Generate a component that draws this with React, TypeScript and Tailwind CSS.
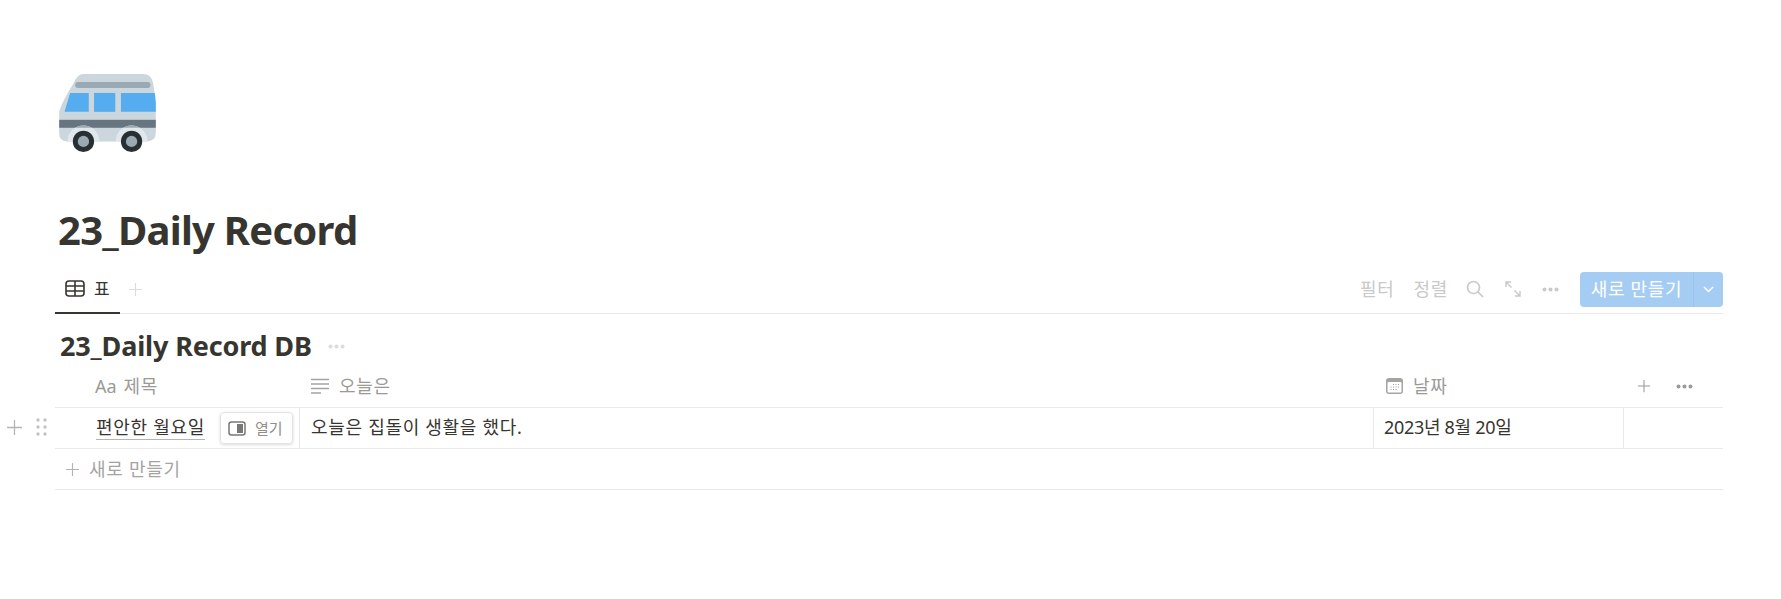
import React from 'react';

const BusIcon = () => (
  <svg width="97" height="78" viewBox="0 0 291 235" className="block">
    <path d="M73 0H253Q278 0 283 28Q291 70 291 110V178Q291 203 263 203H23Q0 203 0 178V113Q8 85 43 28Q55 0 73 0Z" fill="#CCD6DD" />
    <rect x="48" y="24" width="227" height="18" rx="9" fill="#99AAB5" />
    <path d="M33 57H89V114H16Z" fill="#55ACEE" />
    <rect x="105" y="57" width="64" height="57" fill="#55ACEE" />
    <path d="M186 57H288L291 85V114H186Z" fill="#55ACEE" />
    <rect x="0" y="138" width="291" height="24" fill="#66757F" />
    <path d="M25 203A48 48 0 0 1 121 203Z" fill="#E1E8ED" />
    <path d="M170 203A48 48 0 0 1 266 203Z" fill="#E1E8ED" />
    <path d="M48 162A48 48 0 0 1 98 162Z" fill="#99AAB5" />
    <path d="M193 162A48 48 0 0 1 243 162Z" fill="#99AAB5" />
    <circle cx="73" cy="203" r="32" fill="#292F33" />
    <circle cx="218" cy="203" r="32" fill="#292F33" />
    <circle cx="73" cy="203" r="17" fill="#99AAB5" />
    <circle cx="218" cy="203" r="17" fill="#99AAB5" />
  </svg>
);

const TableIcon = () => (
  <svg width="20" height="17" viewBox="0 0 20 17" fill="none" stroke="#37352f" strokeWidth="1.6">
    <rect x="1" y="1" width="18" height="15" rx="3" />
    <path d="M1 6H19M1 11H19M10 1V16" />
  </svg>
);

const Plus = ({ size, color }: { size: number; color: string }) => (
  <svg width={size} height={size} viewBox="0 0 16 16" stroke={color} strokeWidth="1.2" fill="none">
    <path d="M8 1V15M1 8H15" />
  </svg>
);

const Dots = ({ color }: { color: string }) => (
  <svg width="17" height="5" viewBox="0 0 17 5" fill={color}>
    <circle cx="2.5" cy="2.5" r="2" />
    <circle cx="8.5" cy="2.5" r="2" />
    <circle cx="14.5" cy="2.5" r="2" />
  </svg>
);

const LinesIcon = () => (
  <svg width="18" height="16" viewBox="0 0 18 16" stroke="#a5a4a1" strokeWidth="1.4" fill="none">
    <path d="M0 1.5H18M0 6H18M0 10.5H18M0 15H10" />
  </svg>
);

const CalendarIcon = () => (
  <svg width="17" height="16" viewBox="0 0 17 16">
    <rect x="0" y="0" width="17" height="16" rx="3" fill="#a5a4a1" />
    <rect x="1.5" y="4" width="14" height="10.5" rx="1" fill="#fff" />
    <g fill="#a5a4a1">
      <rect x="7" y="6" width="1" height="1" />
      <rect x="9.5" y="6" width="1" height="1" />
      <rect x="12" y="6" width="1" height="1" />
      <rect x="4.5" y="8.5" width="1" height="1" />
      <rect x="7" y="8.5" width="1" height="1" />
      <rect x="9.5" y="8.5" width="1" height="1" />
      <rect x="12" y="8.5" width="1" height="1" />
      <rect x="4.5" y="11" width="1" height="1" />
      <rect x="7" y="11" width="1" height="1" />
      <rect x="9.5" y="11" width="1" height="1" />
    </g>
  </svg>
);

const PeekIcon = () => (
  <svg width="18" height="15" viewBox="0 0 18 15" fill="none">
    <rect x="1" y="1" width="16" height="13" rx="2.5" stroke="#787774" strokeWidth="1.5" />
    <rect x="9" y="3" width="6" height="9" fill="#787774" />
  </svg>
);

const App: React.FC = () => {
  return (
    <div className="min-h-[599px] bg-white pl-[55px] pr-[58px] pt-[74px] font-['Noto_Sans','Noto_Sans_CJK_KR',sans-serif] text-[18px] text-[#37352f]">
      <div className="pl-[4px]">
        <BusIcon />
      </div>

      <h1 className="mt-[52px] pl-[3px] text-[40px] font-bold leading-[52px] tracking-[-0.75px]">23_Daily Record</h1>

      <div className="mt-[11px] flex h-[47px] items-center border-b border-[#e9e9e7]">
        <div className="flex h-[47px] w-[65px] items-center gap-[9px] border-b-2 border-[#37352f] pb-[1px] pl-[10px]">
          <TableIcon />
          <span className="text-[17px]">표</span>
        </div>
        <div className="mb-[2px] ml-[8px]">
          <Plus size={15} color="#dcdcda" />
        </div>
        <div className="mb-[2px] ml-auto flex items-center tracking-[0.7px] text-[#c9c9c7]">
          <span>필터</span>
          <span className="ml-[19px]">정렬</span>
          <svg className="ml-[18px]" width="18" height="18" viewBox="0 0 18 18" fill="none" stroke="#c9c9c7" strokeWidth="1.7">
            <circle cx="7.5" cy="7.5" r="6" />
            <path d="M12 12L17 17" />
          </svg>
          <svg className="ml-[21px]" width="16" height="16" viewBox="0 0 16 16" fill="none" stroke="#c9c9c7" strokeWidth="1.4">
            <path d="M1 6V1H6M1 1L6.5 6.5M15 10V15H10M15 15L9.5 9.5" />
          </svg>
          <span className="ml-[21px] flex">
            <Dots color="#c9c9c7" />
          </span>
          <div className="ml-[21px] flex h-[35px] w-[143px] items-center rounded-[4px] bg-[#a5cdf3] text-white">
            <span className="w-[113px] text-center">새로 만들기</span>
            <span className="flex h-full flex-1 items-center justify-center border-l border-[#98c3eb]">
              <svg width="11" height="7" viewBox="0 0 11 7" fill="none" stroke="#fff" strokeWidth="1.5">
                <path d="M1 1L5.5 5.5L10 1" />
              </svg>
            </span>
          </div>
        </div>
      </div>

      <div className="mt-[13px] flex h-[38px] items-center pl-[5px]">
        <h2 className="text-[27px] font-bold leading-[38px] tracking-[-0.15px]">23_Daily Record DB</h2>
        <span className="ml-[16px] flex">
          <Dots color="#dcdcda" />
        </span>
      </div>

      <div className="flex h-[43px] items-center border-b border-[#e9e9e7] text-[#9b9a97]">
        <div className="flex w-[245px] items-center pl-[40px]">
          <span className="mr-[7px]">Aa</span>
          <span className="tracking-[0.7px]">제목</span>
        </div>
        <div className="flex w-[1074px] items-center gap-[10px] pl-[11px]">
          <LinesIcon />
          <span className="tracking-[0.7px]">오늘은</span>
        </div>
        <div className="flex w-[250px] items-center gap-[10px] pl-[12px]">
          <CalendarIcon />
          <span className="tracking-[0.7px]">날짜</span>
        </div>
        <div className="flex items-center pl-[13px]">
          <Plus size={14} color="#9b9a97" />
          <span className="ml-[25px] flex">
            <Dots color="#9b9a97" />
          </span>
        </div>
      </div>

      <div className="relative flex h-[41px] items-stretch border-b border-[#e9e9e7]">
        <div className="absolute left-[-49px] top-[10px] flex items-center gap-[13px]">
          <Plus size={17} color="#b5b4b2" />
          <svg width="11" height="18" viewBox="0 0 11 18" fill="#c4c3c1">
            <circle cx="2" cy="2" r="1.7" />
            <circle cx="9" cy="2" r="1.7" />
            <circle cx="2" cy="9" r="1.7" />
            <circle cx="9" cy="9" r="1.7" />
            <circle cx="2" cy="16" r="1.7" />
            <circle cx="9" cy="16" r="1.7" />
          </svg>
        </div>
        <div className="flex w-[245px] items-center border-r border-[#e9e9e7] pl-[41px]">
          <span className="border-b border-[#b5b4b2] leading-[23px] tracking-[0.7px]">편안한 월요일</span>
          <div className="ml-auto mr-[6px] flex h-[32px] w-[73px] items-center gap-[9px] rounded-[4px] border border-[#e3e3e1] pl-[7px] text-[15px] text-[#8f8e8b] shadow-[0_1px_3px_rgba(15,15,15,0.15)]">
            <PeekIcon />
            <span>열기</span>
          </div>
        </div>
        <div className="flex w-[1074px] items-center border-r border-[#e9e9e7] pb-[1px] pl-[11px] tracking-[0.7px]">오늘은 집돌이 생활을 했다.</div>
        <div className="flex w-[250px] items-center border-r border-[#e9e9e7] pb-[1px] pl-[10px] tracking-[-0.3px]">2023년 8월 20일</div>
      </div>

      <div className="flex h-[41px] items-center gap-[9px] border-b border-[#e9e9e7] pl-[10px] tracking-[0.7px] text-[#a5a4a1]">
        <Plus size={15} color="#b5b4b2" />
        <span>새로 만들기</span>
      </div>
    </div>
  );
};

export default App;
